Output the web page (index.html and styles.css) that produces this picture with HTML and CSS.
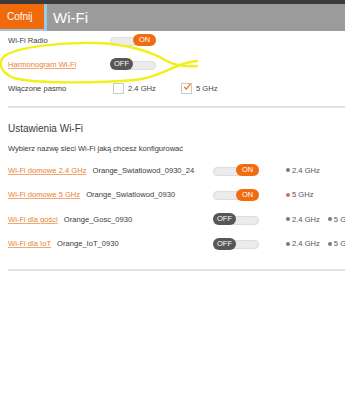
FILE: index.html
```html
<!DOCTYPE html>
<html lang="pl">
<head>
<meta charset="utf-8">
<title>Wi-Fi</title>
<link rel="stylesheet" href="styles.css">
</head>
<body>
<div class="page">
  <div class="topstrip"></div>
  <header class="header">
    <button class="back">Cofnij</button>
    <h1 class="title">Wi-Fi</h1>
  </header>

  <section class="basic">
    <div class="row">
      <span class="label">Wi-Fi Radio</span>
      <span class="toggle on"><span class="knob">ON</span></span>
    </div>
    <div class="row">
      <a class="label link" href="#">Harmonogram Wi-Fi</a>
      <span class="toggle off"><span class="knob">OFF</span></span>
    </div>
    <div class="row">
      <span class="label">Włączone pasmo</span>
      <span class="bands-check">
        <span class="check"></span><span class="cb-text">2.4 GHz</span>
        <span class="check checked"><svg viewBox="0 0 12 12" width="12" height="12"><path d="M2.2 6.2 L5 9.3 L10.8 1.8" fill="none" stroke="#f16e00" stroke-width="1.8" stroke-linecap="round" stroke-linejoin="round"/></svg></span><span class="cb-text">5 GHz</span>
      </span>
    </div>
  </section>

  <hr class="divider">

  <section class="settings">
    <h2 class="heading">Ustawienia Wi-Fi</h2>
    <p class="hint">Wybierz nazwę sieci Wi-Fi jaką chcesz konfigurować</p>
    <div class="net">
      <span class="net-name"><a class="link" href="#">Wi-Fi domowe 2.4 GHz</a><span class="ssid">Orange_Swiatlowod_0930_24</span></span>
      <span class="toggle on"><span class="knob">ON</span></span>
      <span class="freq"><span class="dot"></span>2.4 GHz</span>
    </div>
    <div class="net">
      <span class="net-name"><a class="link" href="#">Wi-Fi domowe 5 GHz</a><span class="ssid">Orange_Swiatlowod_0930</span></span>
      <span class="toggle on"><span class="knob">ON</span></span>
      <span class="freq"><span class="dot warm"></span>5 GHz</span>
    </div>
    <div class="net">
      <span class="net-name"><a class="link" href="#">Wi-Fi dla gości</a><span class="ssid">Orange_Gosc_0930</span></span>
      <span class="toggle off"><span class="knob">OFF</span></span>
      <span class="freq"><span class="dot"></span>2.4 GHz<span class="dot second"></span>5 GHz</span>
    </div>
    <div class="net">
      <span class="net-name"><a class="link" href="#">Wi-Fi dla IoT</a><span class="ssid">Orange_IoT_0930</span></span>
      <span class="toggle off"><span class="knob">OFF</span></span>
      <span class="freq"><span class="dot"></span>2.4 GHz<span class="dot second"></span>5 GHz</span>
    </div>
  </section>

  <hr class="divider bottom">

  <svg class="scribble" viewBox="0 0 345 400" width="345" height="400">
    <path d="M97,43 C60,42 20,47 6,55 C-4,62 1,73 14,78 C35,84 100,83 135,80 C155,78 166,70 180,65 C186,63 192,61 197,61 M97,43 C125,44 150,51 165,60 C175,66 185,67 197,66" fill="none" stroke="#f2f01c" stroke-width="2.4" stroke-linecap="round"/>
  </svg>
</div>
</body>
</html>
```
FILE: styles.css
```css
* { box-sizing: border-box; }
html, body { margin: 0; padding: 0; background: #fff; }
body {
  font-family: "Liberation Sans", Arial, sans-serif;
  color: #3a3a3a;
  width: 345px;
  height: 400px;
  overflow: hidden;
}
.page { position: relative; width: 345px; height: 400px; overflow: hidden; }

.topstrip { height: 4px; background: #3b3b3b; }
.header {
  height: 27px;
  background: #9b9b9b;
  display: flex;
  align-items: stretch;
}
.back {
  width: 47px;
  height: 27px;
  margin: 0;
  padding: 0 0 0 7px;
  text-align: left;
  border: 0;
  border-right: 3px solid #9cc8e6;
  border-bottom: 2px solid #9cc8e6;
  background: #f06a0c;
  color: #fff;
  font-family: "Liberation Sans", Arial, sans-serif;
  font-size: 10px;
}
.title {
  margin: 0 0 0 6px;
  font-weight: normal;
  font-size: 15px;
  line-height: 27px;
  color: #fff;
}

.basic { margin-top: -3px; padding-left: 8px; }
.row { height: 24px; display: flex; align-items: center; }
.label { width: 102px; flex: none; font-size: 7.6px; color: #3a3a3a; }
.link { color: #ee7d2c; text-decoration: underline; text-decoration-color: #f0a878; font-size: 7.6px; }

.toggle {
  position: relative;
  width: 46px;
  height: 12px;
  display: inline-block;
  flex: none;
}
.toggle::before {
  content: "";
  position: absolute;
  left: 0; right: 0; top: 2.5px; height: 7px;
  border-radius: 4px;
  background: #ebebeb;
  border: 1px solid #dedede;
}
.knob {
  position: absolute;
  top: 0;
  width: 23px;
  height: 12px;
  border-radius: 6px;
  color: #fff;
  font-size: 7.5px;
  line-height: 12px;
  text-align: center;
}
.toggle.on .knob { right: 0; background: #f26b0f; }
.toggle.off .knob { left: 0; background: #575757; }

.bands-check { display: flex; align-items: center; font-size: 7.6px; }
.check {
  width: 11px; height: 11px;
  border: 1px solid #c9c9c9;
  background: #fff;
  margin-left: 3px;
  display: inline-flex;
  align-items: center;
  justify-content: center;
  flex: none;
}
.check svg { margin-top: -2px; margin-left: 1px; }
.cb-text { margin-left: 4px; width: 53px; color: #444; }
.check.checked { margin-left: 0; }

.divider {
  margin: 6px 0 0 8px;
  border: 0;
  height: 2px;
  background: #e2e2e2;
}
.divider.bottom { margin-top: 13px; }

.settings { padding-left: 8px; }
.heading {
  margin: 14px 0 0;
  font-weight: normal;
  font-size: 10px;
  line-height: 14px;
  color: #3a3a3a;
}
.hint {
  margin: 7px 0 3px;
  font-size: 7.5px;
  line-height: 12px;
  color: #3a3a3a;
}
.net {
  height: 24.5px;
  display: flex;
  align-items: center;
  white-space: nowrap;
}
.net-name { width: 205px; flex: none; font-size: 7.6px; display: flex; }
.ssid { margin-left: 6px; color: #3a3a3a; }
.freq {
  flex: none;
  margin-left: 27px;
  font-size: 7.6px;
  color: #555;
  display: flex;
  align-items: center;
}
.dot {
  width: 4px; height: 4px;
  border-radius: 50%;
  background: #7a7a7a;
  margin-right: 2px;
  flex: none;
}
.dot.warm { background: #c07a5a; }
.dot.second { margin-left: 8px; }

.scribble { position: absolute; left: 0; top: 0; pointer-events: none; }
```
